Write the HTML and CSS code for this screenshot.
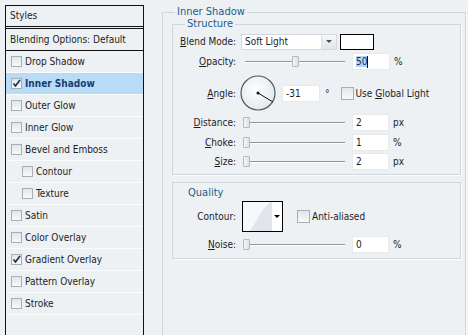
FILE: index.html
```html
<!DOCTYPE html>
<html lang="en">

<head>
    <meta charset="UTF-8">
    <title>Layer Style - Inner Shadow</title>
    <link rel="stylesheet" href="styles.css">
</head>

<body>
    <div class="window">
        <!-- Styles list -->
        <aside class="styles-list">
            <div class="list-head">Styles</div>
            <div class="list-blend">Blending Options: Default</div>
            <ul class="effects">
                <li class="effect"><span class="check"></span>Drop Shadow</li>
                <li class="effect active"><span class="check"><svg width="9" height="9" viewBox="0 0 9 9"><polyline points="1.5,4.5 3.5,7 8,1" fill="none" stroke="#1a2a48" stroke-width="1.6"/></svg></span>Inner Shadow</li>
                <li class="effect"><span class="check"></span>Outer Glow</li>
                <li class="effect"><span class="check"></span>Inner Glow</li>
                <li class="effect"><span class="check"></span>Bevel and Emboss</li>
                <li class="effect sub"><span class="check"></span>Contour</li>
                <li class="effect sub"><span class="check"></span>Texture</li>
                <li class="effect"><span class="check"></span>Satin</li>
                <li class="effect"><span class="check"></span>Color Overlay</li>
                <li class="effect"><span class="check"><svg width="9" height="9" viewBox="0 0 9 9"><polyline points="1.5,4.5 3.5,7 8,1" fill="none" stroke="#1a2a48" stroke-width="1.6"/></svg></span>Gradient Overlay</li>
                <li class="effect"><span class="check"></span>Pattern Overlay</li>
                <li class="effect"><span class="check"></span>Stroke</li>
            </ul>
        </aside>

        <!-- Effect options -->
        <main class="options">
            <fieldset class="group outer">
                <legend class="group-title">Inner Shadow</legend>

                <fieldset class="group structure">
                    <legend class="group-title">Structure</legend>

                    <div class="row first">
                        <span class="lbl"><u>B</u>lend Mode:</span>
                        <div class="select">
                            <span class="select-text">Soft Light</span>
                            <span class="select-btn"></span>
                        </div>
                        <span class="swatch"></span>
                    </div>

                    <div class="row">
                        <span class="lbl"><u>O</u>pacity:</span>
                        <div class="slider">
                            <span class="track"></span>
                            <span class="thumb" style="left: 51px"></span>
                        </div>
                        <span class="field wide"><span class="sel">50</span><span class="caret"></span></span>
                        <span class="unit">%</span>
                    </div>

                    <div class="row angle">
                        <span class="lbl"><u>A</u>ngle:</span>
                        <svg class="dial" width="36" height="36" viewBox="0 0 36 36">
                            <defs>
                                <radialGradient id="dialFill" cx="0.45" cy="0.4" r="0.6">
                                    <stop offset="0" stop-color="#ffffff"/>
                                    <stop offset="1" stop-color="#e4e8ec"/>
                                </radialGradient>
                            </defs>
                            <circle cx="18" cy="18" r="17" fill="url(#dialFill)" stroke="#50565c" stroke-width="1.2"/>
                            <circle cx="18" cy="18" r="1.5" fill="#111"/>
                            <line x1="18" y1="18" x2="33" y2="27" stroke="#111" stroke-width="1"/>
                        </svg>
                        <span class="field angle-field">-31</span>
                        <span class="deg">&deg;</span>
                        <span class="check big"></span>
                        <span class="check-label">Use <u>G</u>lobal Light</span>
                    </div>

                    <div class="row">
                        <span class="lbl"><u>D</u>istance:</span>
                        <div class="slider">
                            <span class="track"></span>
                            <span class="thumb" style="left: 2px"></span>
                        </div>
                        <span class="field">2</span>
                        <span class="unit">px</span>
                    </div>

                    <div class="row">
                        <span class="lbl"><u>C</u>hoke:</span>
                        <div class="slider">
                            <span class="track"></span>
                            <span class="thumb" style="left: 2px"></span>
                        </div>
                        <span class="field">1</span>
                        <span class="unit">%</span>
                    </div>

                    <div class="row last">
                        <span class="lbl"><u>S</u>ize:</span>
                        <div class="slider">
                            <span class="track"></span>
                            <span class="thumb" style="left: 2px"></span>
                        </div>
                        <span class="field">2</span>
                        <span class="unit">px</span>
                    </div>
                </fieldset>

                <div class="group quality">
                    <div class="q-title">Quality</div>

                    <div class="row contour-row">
                        <span class="lbl">Contour:</span>
                        <div class="contour">
                            <svg width="29" height="29" viewBox="0 0 29 29">
                                <rect width="29" height="29" fill="#f7f8fa"/>
                                <path d="M7 29 C13 20 19 7 27 0 L29 0 L29 29 Z" fill="#e1e4eb"/>
                            </svg>
                            <span class="contour-btn"></span>
                        </div>
                        <span class="check big aa"></span>
                        <span class="check-label">Anti-aliased</span>
                    </div>

                    <div class="row noise">
                        <span class="lbl"><u>N</u>oise:</span>
                        <div class="slider">
                            <span class="track"></span>
                            <span class="thumb" style="left: 2px"></span>
                        </div>
                        <span class="field">0</span>
                        <span class="unit">%</span>
                    </div>
                </div>
            </fieldset>
        </main>
    </div>
</body>

</html>
```

FILE: styles.css
```css
* {
    box-sizing: border-box;
}

body {
    margin: 0;
    height: 335px;
    overflow: hidden;
    background-color: #edf1f4;
    font-family: "DejaVu Sans Condensed", "Liberation Sans", sans-serif;
    font-size: 10px;
    color: #1d1d1d;
}

.window {
    display: flex;
    align-items: flex-start;
    padding: 5px 0 0 5px;
}

/* Styles list */

.styles-list {
    flex: none;
    width: 139px;
    height: 340px;
    border: 1px solid #111;
}

.list-head {
    height: 23px;
    line-height: 20px;
    padding-left: 4px;
    border-bottom: 3px double #111;
}

.list-blend {
    height: 22px;
    line-height: 21px;
    padding-left: 4px;
    border-bottom: 1px solid #111;
}

.effects {
    list-style: none;
    margin: 0;
    padding: 0;
}

.effect {
    display: flex;
    align-items: center;
    height: 22px;
    padding-left: 5px;
    border-bottom: 1px solid #f9fbfc;
}

.effect.sub {
    padding-left: 16px;
}

.effect.active {
    background-color: #b8dcf6;
    font-weight: bold;
    color: #173c72;
}

.check {
    flex: none;
    display: flex;
    align-items: center;
    justify-content: center;
    width: 11px;
    height: 11px;
    margin-right: 3px;
    border: 1px solid #a7aeb5;
    background: linear-gradient(#e2e6ea, #f8f9fa);
}

.check.big {
    width: 13px;
    height: 13px;
    margin-right: 2px;
}

/* Options panel */

.options {
    margin: 1px 0 0 18px;
}

.group {
    margin: 0;
    padding: 0;
    min-width: 0;
    border: 1px solid #cfd6dc;
    box-shadow: 1px 1px 0 #fbfcfd;
}

.outer {
    width: 304px;
    height: 340px;
}

.group-title {
    margin-left: 12px;
    padding: 0 2px;
    line-height: 12px;
    font-size: 11px;
    color: #215d8c;
}

.structure {
    margin: 0 4px 0 9px;
    padding-bottom: 4px;
}

.row {
    display: flex;
    align-items: center;
    height: 17px;
    margin-top: 3px;
}

.row.angle {
    height: 36px;
    margin-top: 5px;
}

.row.last {
    margin-top: 2px;
}

.lbl {
    flex: none;
    width: 63px;
    margin-right: 5px;
    text-align: right;
}

.select {
    display: flex;
    align-items: center;
    width: 96px;
    height: 16px;
    border: 1px solid #d3d9de;
    background-color: #fff;
}

.select-text {
    flex: 1;
    padding-left: 3px;
}

.select-btn {
    display: flex;
    align-items: center;
    justify-content: center;
    width: 15px;
    height: 14px;
    border-left: 1px solid #dde2e6;
    background: linear-gradient(#f6f8f9, #e0e5e9);
}

.select-btn::after {
    content: "";
    border-left: 3px solid transparent;
    border-right: 3px solid transparent;
    border-top: 3px solid #4a4f55;
}

.swatch {
    width: 34px;
    height: 16px;
    margin-left: 3px;
    border: 1px solid #000;
    background-color: #fff;
}

.slider {
    position: relative;
    flex: none;
    display: flex;
    align-items: center;
    width: 106px;
    height: 17px;
}

.track {
    flex: 1;
    height: 2px;
    margin: 0 2px 0 4px;
    border-top: 1px solid #8d949b;
    border-bottom: 1px solid #fff;
}

.thumb {
    position: absolute;
    top: 3px;
    width: 7px;
    height: 11px;
    border: 1px solid #b3bac1;
    border-radius: 1px;
    background: linear-gradient(90deg, #f4f6f8, #dde2e7);
}

.field {
    display: flex;
    align-items: center;
    width: 37px;
    height: 17px;
    margin-left: 5px;
    padding-left: 3px;
    border: 1px solid #e6eaed;
    background-color: #fff;
}

.field.wide {
    width: 38px;
}

.sel {
    background-color: #b3d3f3;
    color: #10306a;
}

.caret {
    width: 1px;
    height: 12px;
    background-color: #111;
}

.unit {
    margin-left: 4px;
}

.dial {
    flex: none;
    margin-left: -1px;
}

.angle-field {
    width: 38px;
    margin-left: 6px;
}

.deg {
    margin-left: 5px;
    margin-right: 11px;
}

/* Quality */

.quality {
    margin: 7px 4px 0 9px;
    padding-bottom: 5px;
}

.q-title {
    margin-top: 3px;
    padding-left: 15px;
    line-height: 13px;
    font-size: 11px;
    color: #215d8c;
}

.row.contour-row {
    height: 31px;
    margin-top: 2px;
}

.contour {
    display: flex;
    width: 41px;
    height: 31px;
    margin-left: 1px;
    border: 1px solid #000;
    background-color: #fff;
}

.contour-btn {
    display: flex;
    align-items: center;
    justify-content: center;
    flex: 1;
}

.contour-btn::after {
    content: "";
    border-left: 3px solid transparent;
    border-right: 3px solid transparent;
    border-top: 3px solid #000;
}

.check.aa {
    margin-left: 14px;
}

.row.noise {
    margin-top: 4px;
}
```
